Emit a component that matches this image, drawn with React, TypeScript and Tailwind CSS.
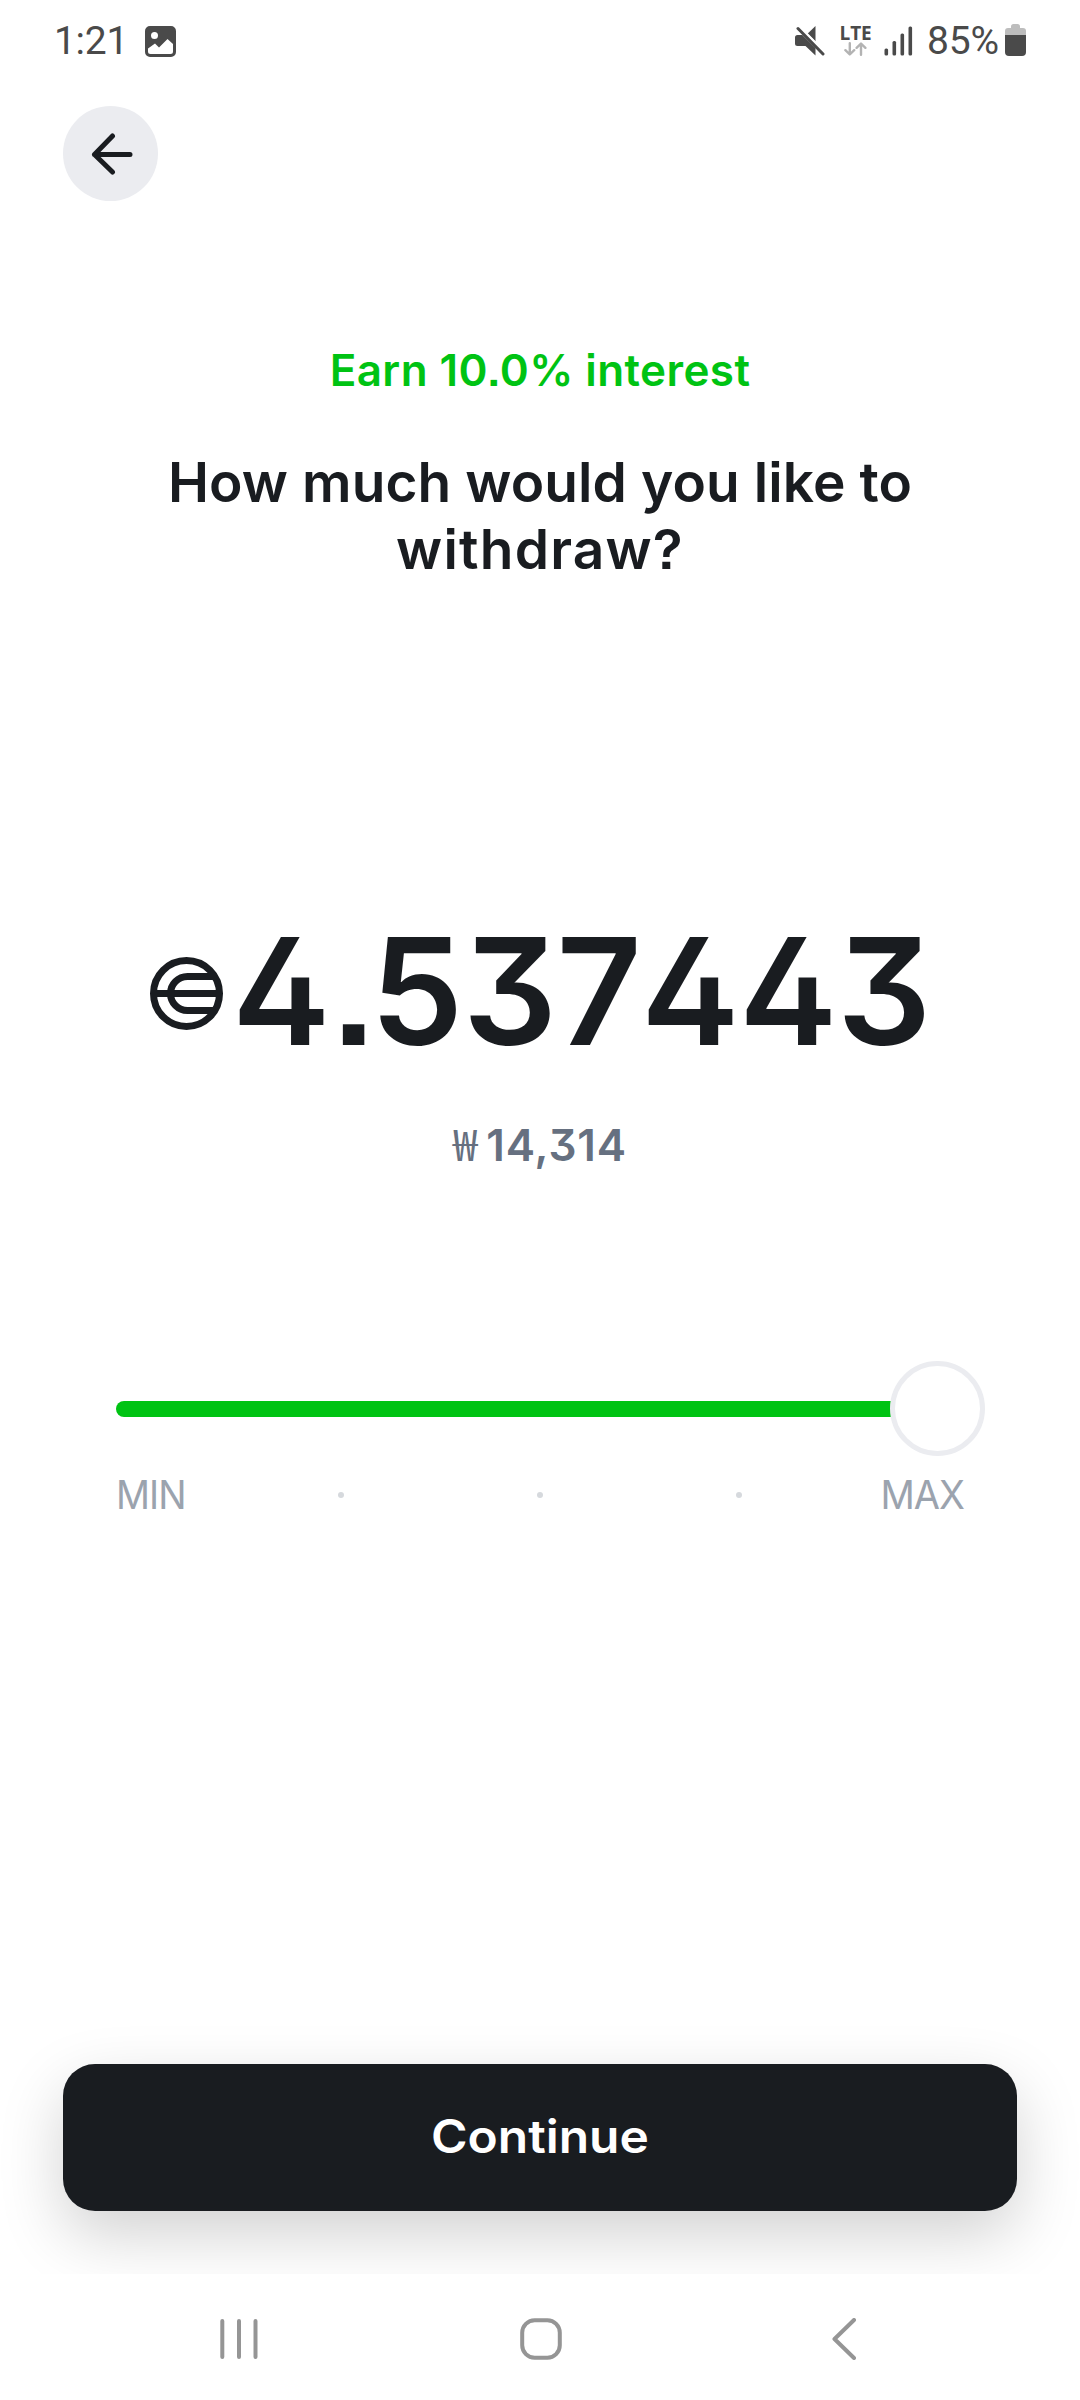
import React from 'react';

const ticks = [25, 50, 75];

function StatusBar() {
  return (
    <header className="flex h-20 items-center justify-between pl-[54px] pr-[54px] text-[#4a4a4a]">
      <div className="flex items-center">
        <span className="mt-[1px] w-[91px] font-['Roboto'] text-[39px] leading-[50px] tracking-[-0.3px]">1:21</span>
        <svg className="mt-[3px] h-[31px] w-[31px]" viewBox="0 0 31 31" fill="currentColor">
          <path
            fillRule="evenodd"
            d="M5 0h21a5 5 0 0 1 5 5v21a5 5 0 0 1-5 5H5a5 5 0 0 1-5-5V5a5 5 0 0 1 5-5zM9.500 6a3.500 3.500 0 1 0 0 7a3.500 3.500 0 0 0 0-7zM3 22.500v3A2.500 2.500 0 0 0 5.500 28h20a2.500 2.500 0 0 0 2.500-2.500V18l-5.500-5L14 21.500l-4-4z"
          />
        </svg>
      </div>

      <div className="flex items-center">
        <svg className="mt-[1px] h-[30px] w-[30px]" viewBox="0 0 30 30" fill="currentColor">
          <path d="M20.500 0v15.500L12.500 7.800z" />
          <path d="M2.500 9h4.800l13.200 13v7.500L10.500 20h-8A2.500 2.500 0 0 1 0 17.500v-6A2.500 2.500 0 0 1 2.500 9z" />
          <path d="M3 2.500l25 25.500" stroke="#fff" strokeWidth="3" transform="translate(1.500 -1.500)" />
          <path d="M3 2.500l25 25.500" stroke="currentColor" strokeWidth="3" strokeLinecap="round" />
        </svg>
        <div className="ml-[15px] flex w-[31px] flex-col items-center">
          <span className="font-['Open_Sans'] text-[19px] font-bold leading-[16px] tracking-[-0.2px]">LTE</span>
          <svg className="mt-[1px] h-[14px] w-[23px]" viewBox="0 0 23 14" fill="none" stroke="#b3b3b3" strokeWidth="2.400" strokeLinecap="round" strokeLinejoin="round">
            <path d="M5.800 1.200v11M1.400 8.200l4.400 4.300l4.400-4.300" />
            <path d="M17 12.800v-11M12.600 5.800L17 1.500l4.400 4.300" />
          </svg>
        </div>
        <svg className="ml-[13px] mt-[1px] h-[30px] w-[29px]" viewBox="0 0 29 30" fill="currentColor">
          <rect x="0.500" y="22.500" width="3.600" height="7" rx="1.500" />
          <rect x="8.500" y="15" width="3.600" height="14.500" rx="1.500" />
          <rect x="16.500" y="7.500" width="3.600" height="22" rx="1.500" />
          <rect x="24.500" y="0.500" width="3.600" height="29" rx="1.500" />
        </svg>
        <span className="ml-[14px] mt-[1px] w-[78px] font-['Roboto'] text-[39px] leading-[50px] tracking-[-0.2px]">85%</span>
        <svg className="h-[32px] w-[21px]" viewBox="0 0 21 32">
          <path d="M6 2.500A2.500 2.500 0 0 1 8.500 0h4A2.500 2.500 0 0 1 15 2.500V4h3a3 3 0 0 1 3 3v4H0V7a3 3 0 0 1 3-3h3z" fill="#bdbdbd" />
          <path d="M0 11h21v17a4 4 0 0 1-4 4H4a4 4 0 0 1-4-4z" fill="currentColor" />
        </svg>
      </div>
    </header>
  );
}

function CurrencyMark() {
  return (
    <svg className="mt-[4px] h-[73px] w-[73px] shrink-0" viewBox="0 0 73 73" fill="none" stroke="currentColor" strokeWidth="7">
      <circle cx="36.500" cy="36.500" r="33" />
      <path d="M3 36.500h67" />
      <path d="M63 19.500H37.500a17 17 0 0 0 0 34H63" />
    </svg>
  );
}

function AmountSlider() {
  return (
    <div className="mt-[185px] pl-[116px] pr-[95px]">
      <div className="flex h-[95px] items-center">
        <div className="h-4 flex-1 rounded-l-full bg-[#00c313]" />
        <div className="-ml-px h-[95px] w-[95px] rounded-full border-[5px] border-[#ebecf0] bg-white" />
      </div>
      <div className="mt-[14px] flex h-[50px] items-center pr-[21px] text-[40px] leading-[50px] text-[#9ba3ae]">
        <span className="w-[222px] origin-left scale-x-[0.94] tracking-[-1px]">MIN</span>
        <div className="flex w-[404px] justify-between">
          {ticks.map(tick => (
            <span key={tick} className="h-1.5 w-1.5 rounded-full bg-[#d6d9dd]" />
          ))}
        </div>
        <span className="flex-1 origin-right scale-x-[0.95] text-right tracking-[-1px]">MAX</span>
      </div>
    </div>
  );
}

function NavigationBar() {
  return (
    <nav className="flex h-[126px] items-center pl-[218px] pt-[4px] text-[#959595]">
      <svg className="h-[42px] w-[42px]" viewBox="0 0 42 42" fill="none" stroke="currentColor" strokeWidth="4" strokeLinecap="round">
        <path d="M4.300 3v36M21 3v36M37.500 3v36" />
      </svg>
      <svg className="ml-[260px] h-[42px] w-[42px]" viewBox="0 0 42 42" fill="none" stroke="currentColor" strokeWidth="4">
        <rect x="2.200" y="2.200" width="37.600" height="37.600" rx="12.500" />
      </svg>
      <svg className="ml-[270px] h-[42px] w-[26px]" viewBox="0 0 26 42" fill="none" stroke="currentColor" strokeWidth="4" strokeLinecap="round" strokeLinejoin="round">
        <path d="M22 2L2.500 21L22 40" />
      </svg>
    </nav>
  );
}

export default function App() {
  return (
    <div className="flex h-[2400px] w-[1080px] flex-col overflow-hidden bg-white font-['Inter',sans-serif] text-[#191c20]">
      <StatusBar />

      <main className="flex flex-1 flex-col">
        <button className="ml-[63px] mt-[26px] flex h-[95px] w-[95px] items-center justify-center rounded-full bg-[#ebecf0]">
          <svg className="ml-[2px] h-[42px] w-[42px]" viewBox="0 0 42 42" fill="none" stroke="currentColor" strokeWidth="5" strokeLinecap="round" strokeLinejoin="round">
            <path d="M39 21.500H3.500M21.500 3L3.500 21.500L21.500 39" />
          </svg>
        </button>

        <p className="mt-[139px] text-center text-[44px] font-semibold leading-[60px] tracking-[0.4px] text-[#00c313] [font-feature-settings:'ss07']">
          Earn 10.0% interest
        </p>
        <h1 className="mt-[49px] px-[120px] text-center text-[55px] font-semibold leading-[67px] tracking-[0.1px] [font-feature-settings:'ss07']">
          How much would you like to
          <br />
          <span className="tracking-[1.2px]">withdraw?</span>
        </h1>

        <div className="mt-[318px] flex h-[180px] items-center pl-[150px]">
          <CurrencyMark />
          <span className="ml-[9px] mt-[2px] whitespace-nowrap text-[148px] font-semibold leading-[180px] tracking-[-0.6px] [font-feature-settings:'cv02','cv09','ss07','kern'_0]">
            4<span className="tracking-[-7px]">.</span>537443
          </span>
        </div>
        <p className="mt-[34px] flex h-[61px] items-baseline justify-center text-[44px] leading-[60px] text-[#667080]">
          <span className="font-['Noto_Sans_CJK_KR'] leading-[44px]">₩</span>
          <span className="ml-[9px] font-semibold tracking-[0.9px] [font-feature-settings:'cv09']">14,314</span>
        </p>

        <AmountSlider />

        <div className="mt-auto overflow-hidden px-[63px] pb-[63px] pt-[80px]">
          <button className="h-[147px] w-full rounded-[32px] bg-[#191c20] pb-[2px] text-[46px] font-semibold text-white shadow-[0_24px_64px_rgba(0,0,0,0.18)]">
            <span className="inline-block scale-x-[1.08]">Continue</span>
          </button>
        </div>
      </main>

      <NavigationBar />
    </div>
  );
}
